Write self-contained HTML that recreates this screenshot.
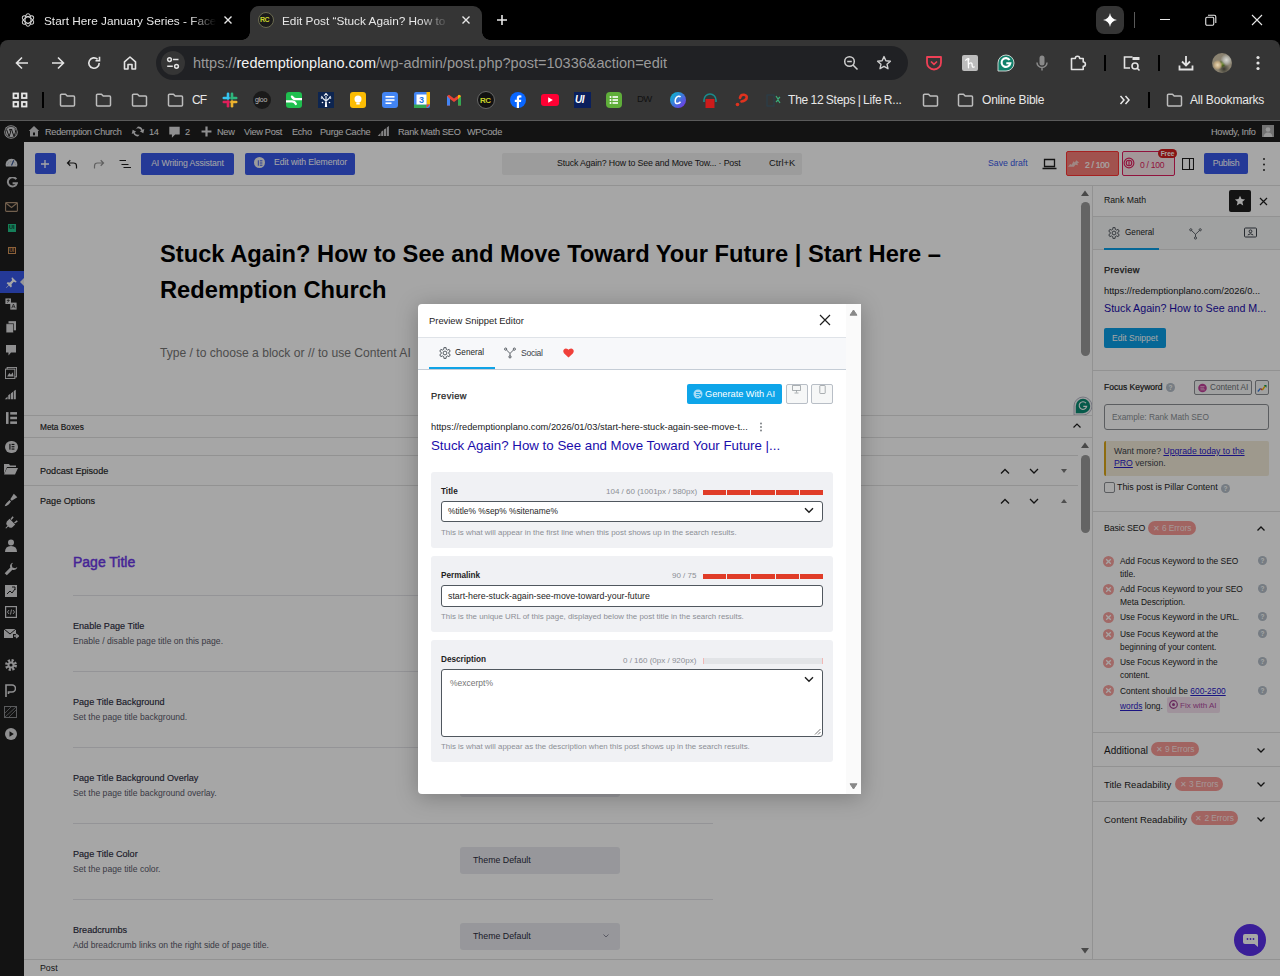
<!DOCTYPE html>
<html><head><meta charset="utf-8"><title>Edit Post</title>
<style>
*{margin:0;padding:0;box-sizing:border-box}
html,body{width:1280px;height:976px;overflow:hidden;background:#000;font-family:"Liberation Sans",sans-serif}
.a{position:absolute}
svg{display:block}
/* chrome */
#tabs{left:0;top:0;width:1280px;height:40px;background:#000}
.tabt{font-size:11.8px;color:#e8e8e8;white-space:nowrap;overflow:hidden;top:14px;height:16px;line-height:15px}
#toolbar{left:0;top:40px;width:1280px;height:81px;background:#353535;border-radius:8px 8px 0 0}
#omni{left:156px;top:46px;width:752px;height:34px;border-radius:17px;background:#202124}
.bmt{font-size:12px;color:#e8e8e8;white-space:nowrap;top:92px;line-height:16px;letter-spacing:-0.2px}
#bmline{left:0;top:120px;width:1280px;height:1px;background:#5a5a5a}
/* wp */
#wp{left:0;top:0;width:1280px;height:976px;clip-path:inset(121px 0 0 0)}
.abt{top:126px;font-size:9.2px;line-height:13px;color:#f0f0f1;white-space:nowrap;letter-spacing:-0.3px}
.mbt{margin-top:1px;font-size:9.1px;line-height:13px;color:#1e1e1e;white-space:nowrap;-webkit-text-stroke:0.15px #1e1e1e}
.poline{left:73px;width:640px;height:1px;background:#e3e3e8}
.pol{left:73px;margin-top:1px;font:normal 9.1px/13px 'Liberation Sans';color:#2c2c40;white-space:nowrap;-webkit-text-stroke:0.15px #2c2c40}
.pod{left:73px;margin-top:1px;font-size:8.6px;line-height:13px;color:#5a5a6a;white-space:nowrap}
.pobox{left:460px;width:160px;height:27px;background:#e8e9ee;border-radius:3px;font:normal 8.8px/27px 'Liberation Sans';color:#2c2c40;padding-left:13px;white-space:nowrap}
.rmh{left:1104px;font-size:9.2px;line-height:13px;color:#1e1e1e;white-space:nowrap;letter-spacing:-0.25px}
.rmbadge{height:14px;border-radius:7px;background:#f89a96;color:rgba(255,255,255,0.8);font-size:8.3px;line-height:14px;text-align:center;white-space:nowrap}
.rmx{left:1103px;width:11px;height:11px;border-radius:50%;background:#f8a29e}
.rmq{left:1258px;width:9px;height:9px;border-radius:50%;background:#b5bfc9;font:bold 6.5px/9px 'Liberation Sans';color:#fff;text-align:center}
.rmi{left:1120px;font-size:8.4px;line-height:12.5px;color:#1e1e1e;white-space:nowrap}
.lnk{color:#2a20c8;text-decoration:underline}
.mpanel{left:431px;width:402px;background:#f0f1f4;border-radius:3px}
.mlab{left:441px;margin-top:1.5px;font:bold 8.2px/12px 'Liberation Sans';color:#1e1e1e;white-space:nowrap}
.mcnt{font-size:8px;line-height:12px;color:#8c8f94;white-space:nowrap}
.mbar{left:703px;width:120px;height:5px;display:flex;gap:1px}
.mbar i{flex:1;background:#e03c28}
.minp{left:441px;width:382px;border:1px solid #50575e;border-radius:3px;background:#fff}
.mval{left:448px;font-size:8.4px;line-height:12px;color:#1e1e1e;white-space:nowrap}
.mhelp{left:441px;font-size:7.9px;line-height:11px;color:#8c8f94;white-space:nowrap}
.btnb{background:#3858e9;color:#fff;font-size:8.7px;line-height:21px;letter-spacing:-0.1px;text-align:center;border-radius:2px;white-space:nowrap}
</style></head><body>
<!-- ============ TAB STRIP ============ -->

<div id="tabs" class="a">
 <svg class="a" style="left:20px;top:12px" width="16" height="16" viewBox="0 0 24 24"><g fill="none" stroke="#d8d8d8" stroke-width="1.6"><ellipse cx="12" cy="12" rx="4.5" ry="9.5"/><ellipse cx="12" cy="12" rx="4.5" ry="9.5" transform="rotate(60 12 12)"/><ellipse cx="12" cy="12" rx="4.5" ry="9.5" transform="rotate(120 12 12)"/></g></svg>
 <div class="a tabt" style="left:44px;width:172px;-webkit-mask-image:linear-gradient(90deg,#000 85%,transparent 100%)">Start Here January Series - Facebook</div>
 <svg class="a" style="left:223px;top:15px" width="10" height="10" viewBox="0 0 10 10"><path d="M1.5 1.5L8.5 8.5M8.5 1.5L1.5 8.5" stroke="#e8e8e8" stroke-width="1.4"/></svg>
 <!-- active tab -->
 <div class="a" style="left:250px;top:6px;width:232px;height:40px;background:#353535;border-radius:9px 9px 0 0"></div>
 <div class="a" style="left:242px;top:32px;width:8px;height:8px;background:radial-gradient(circle at 0 0,#000 7.5px,#353535 8px)"></div>
 <div class="a" style="left:482px;top:32px;width:8px;height:8px;background:radial-gradient(circle at 100% 0,#000 7.5px,#353535 8px)"></div>
 <div class="a" style="left:258px;top:12px;width:16px;height:16px;border-radius:50%;background:#1a1a1a;border:1px solid #6a6a50"></div>
 <div class="a" style="left:260px;top:16px;font:bold 7px 'Liberation Sans';color:#c8d22a;letter-spacing:-0.5px">RC</div>
 <div class="a tabt" style="left:282px;width:168px;-webkit-mask-image:linear-gradient(90deg,#000 82%,transparent 100%)">Edit Post “Stuck Again? How to See and Move</div>
 <svg class="a" style="left:461px;top:15px" width="10" height="10" viewBox="0 0 10 10"><path d="M1.5 1.5L8.5 8.5M8.5 1.5L1.5 8.5" stroke="#e8e8e8" stroke-width="1.4"/></svg>
 <svg class="a" style="left:495px;top:13px" width="14" height="14" viewBox="0 0 14 14"><path d="M7 2V12M2 7H12" stroke="#e8e8e8" stroke-width="1.6"/></svg>
 <!-- right controls -->
 <div class="a" style="left:1096px;top:6px;width:28px;height:28px;border-radius:8px;background:#353535"></div>
 <svg class="a" style="left:1103px;top:13px" width="14" height="14" viewBox="0 0 14 14"><path d="M7 0C7.6 4 10 6.4 14 7C10 7.6 7.6 10 7 14C6.4 10 4 7.6 0 7C4 6.4 6.4 4 7 0Z" fill="#fff"/></svg>
 <div class="a" style="left:1134px;top:12px;width:1px;height:16px;background:#5a5a5a"></div>
 <div class="a" style="left:1160px;top:19px;width:10px;height:1px;background:#e8e8e8"></div>
 <svg class="a" style="left:1205px;top:14px" width="12" height="12" viewBox="0 0 12 12"><rect x="0.75" y="3.25" width="8" height="8" rx="1.2" fill="none" stroke="#e8e8e8" stroke-width="1.1"/><path d="M3 1.2H9.3A1.5 1.5 0 0 1 10.8 2.7V9" fill="none" stroke="#e8e8e8" stroke-width="1.1"/></svg>
 <svg class="a" style="left:1251px;top:14px" width="12" height="12" viewBox="0 0 12 12"><path d="M1 1L11 11M11 1L1 11" stroke="#e8e8e8" stroke-width="1.1"/></svg>
</div>

<!-- ============ TOOLBAR ============ -->

<div id="toolbar" class="a"></div>
<!-- nav icons -->
<svg class="a" style="left:14px;top:55px" width="16" height="16" viewBox="0 0 16 16"><path d="M14 8H2.5M8 2.5L2.5 8L8 13.5" fill="none" stroke="#e3e3e3" stroke-width="1.6"/></svg>
<svg class="a" style="left:50px;top:55px" width="16" height="16" viewBox="0 0 16 16"><path d="M2 8H13.5M8 2.5L13.5 8L8 13.5" fill="none" stroke="#e3e3e3" stroke-width="1.6"/></svg>
<svg class="a" style="left:86px;top:55px" width="16" height="16" viewBox="0 0 16 16"><path d="M13.2 8A5.2 5.2 0 1 1 11.6 4.3" fill="none" stroke="#e3e3e3" stroke-width="1.6"/><path d="M13.5 1.8V5.8H9.5" fill="none" stroke="#e3e3e3" stroke-width="1.6"/></svg>
<svg class="a" style="left:122px;top:55px" width="16" height="16" viewBox="0 0 16 16"><path d="M2.5 14V6.8L8 2L13.5 6.8V14H10V9.5H6V14Z" fill="none" stroke="#e3e3e3" stroke-width="1.6" stroke-linejoin="round"/></svg>
<div id="omni" class="a"></div>
<div class="a" style="left:161px;top:51px;width:24px;height:24px;border-radius:50%;background:#353535"></div>
<svg class="a" style="left:165px;top:55px" width="16" height="16" viewBox="0 0 16 16"><g fill="none" stroke="#e3e3e3" stroke-width="1.5"><circle cx="4.5" cy="4.6" r="1.9"/><path d="M8 4.6H13.5M2.2 11.3H7.8"/><circle cx="11.5" cy="11.3" r="1.9"/></g></svg>
<div class="a" style="left:193px;top:54px;font-size:14.5px;line-height:18px;color:#9a9a9a;white-space:nowrap;letter-spacing:0">https://<span style="color:#f2f2f2">redemptionplano.com</span>/wp-admin/post.php?post=10336&amp;action=edit</div>
<svg class="a" style="left:843px;top:55px" width="16" height="16" viewBox="0 0 16 16"><g fill="none" stroke="#cfcfcf" stroke-width="1.5"><circle cx="6.5" cy="6.5" r="4.8"/><path d="M10 10L14.5 14.5M4.2 6.5H8.8"/></g></svg>
<svg class="a" style="left:876px;top:55px" width="16" height="16" viewBox="0 0 16 16"><path d="M8 1.6L9.9 5.8L14.4 6.2L11 9.2L12 13.7L8 11.3L4 13.7L5 9.2L1.6 6.2L6.1 5.8Z" fill="none" stroke="#cfcfcf" stroke-width="1.4" stroke-linejoin="round"/></svg>
<!-- extensions -->
<svg class="a" style="left:925px;top:55px" width="18" height="16" viewBox="0 0 18 16"><path d="M2 2H16V7.5A7 7 0 0 1 2 7.5Z" fill="none" stroke="#ef4056" stroke-width="1.8" stroke-linejoin="round"/><path d="M6 6.5L9 9.3L12 6.5" fill="none" stroke="#ef4056" stroke-width="1.7"/></svg>
<div class="a" style="left:962px;top:55px;width:16px;height:16px;background:#bdbdbd;border-radius:2px"></div>
<svg class="a" style="left:962px;top:55px" width="16" height="16" viewBox="0 0 16 16"><path d="M3.8 5.2Q5.5 3.2 6.8 3.8Q7.3 4.8 6 5.6M6.2 3.6L6.5 12.8M6.5 9.5Q8 7.2 9.5 8Q10.3 8.8 10.2 11Q10.4 12.6 12.2 12" fill="none" stroke="#fff" stroke-width="1.3" stroke-linecap="round"/></svg>
<svg class="a" style="left:997px;top:54px" width="18" height="18" viewBox="0 0 18 18"><path d="M9 1A8 8 0 1 1 9 17H1V9A8 8 0 0 1 9 1Z" fill="#11806a" stroke="#dcdcdc" stroke-width="0.9"/><path d="M12.6 6A4.4 4.4 0 1 0 13.3 9.3H9.3" fill="none" stroke="#fff" stroke-width="2.1"/></svg>
<svg class="a" style="left:1034px;top:55px" width="16" height="16" viewBox="0 0 16 16"><rect x="5.5" y="0.5" width="5" height="10" rx="2.5" fill="#8a8a8a"/><path d="M3 7.5A5 5 0 0 0 13 7.5M8 12.5V15.5" fill="none" stroke="#8a8a8a" stroke-width="1.5"/></svg>
<svg class="a" style="left:1070px;top:54px" width="17" height="17" viewBox="0 0 17 17"><path d="M1.5 4.5H5.3A2.2 2.2 0 0 1 9.7 4.5H13.2V8A2.2 2.2 0 0 1 13.2 12.4V15.5H1.5Z" fill="none" stroke="#e3e3e3" stroke-width="1.6" stroke-linejoin="round"/></svg>
<div class="a" style="left:1104px;top:55px;width:2px;height:16px;background:#000"></div>
<svg class="a" style="left:1123px;top:55px" width="18" height="17" viewBox="0 0 18 17"><path d="M7 13H1.5V2H9.5" fill="none" stroke="#e3e3e3" stroke-width="1.6"/><rect x="9.5" y="2" width="7" height="3" fill="#e3e3e3"/><circle cx="12" cy="11" r="3" fill="none" stroke="#e3e3e3" stroke-width="1.6"/><path d="M14 13L16.5 15.5" stroke="#e3e3e3" stroke-width="1.6"/></svg>
<div class="a" style="left:1158px;top:55px;width:2px;height:16px;background:#000"></div>
<svg class="a" style="left:1178px;top:55px" width="16" height="16" viewBox="0 0 16 16"><path d="M8 1V10M4 6.5L8 10.5L12 6.5M1.5 10.5V14.5H14.5V10.5" fill="none" stroke="#e3e3e3" stroke-width="1.8"/></svg>
<div class="a" style="left:1212px;top:53px;width:20px;height:20px;border-radius:50%;background:radial-gradient(circle at 28% 60%,#e8d8b8 0,#c0a880 3px,transparent 5px),radial-gradient(circle at 72% 35%,#d8d8d0 0,#b0b0a8 3px,transparent 6px),radial-gradient(circle at 50% 55%,#7a9a30 0,#4a6020 2px,transparent 4px),radial-gradient(circle at 60% 80%,#3a3a30 0,transparent 6px),#8a8270"></div>
<svg class="a" style="left:1254px;top:55px" width="8" height="16" viewBox="0 0 8 16"><g fill="#e3e3e3"><circle cx="4" cy="2.5" r="1.6"/><circle cx="4" cy="8" r="1.6"/><circle cx="4" cy="13.5" r="1.6"/></g></svg>


<!-- bookmarks -->
<svg class="a" style="left:12px;top:92px" width="16" height="16" viewBox="0 0 16 16"><g fill="none" stroke="#e8e8e8" stroke-width="1.8"><rect x="1.5" y="1.5" width="4.5" height="4.5"/><rect x="10" y="1.5" width="4.5" height="4.5"/><rect x="1.5" y="10" width="4.5" height="4.5"/><rect x="10" y="10" width="4.5" height="4.5"/></g></svg>
<div class="a" style="left:42px;top:92px;width:2px;height:16px;background:#000"></div>
<svg class="a" style="left:59px;top:92px" width="17" height="16" viewBox="0 0 17 16"><path d="M1.5 3.2A1 1 0 0 1 2.5 2.2H6.5L8.2 4H14.5A1 1 0 0 1 15.5 5V13A1 1 0 0 1 14.5 14H2.5A1 1 0 0 1 1.5 13Z" fill="none" stroke="#bdbdbd" stroke-width="1.5" stroke-linejoin="round"/></svg><svg class="a" style="left:95px;top:92px" width="17" height="16" viewBox="0 0 17 16"><path d="M1.5 3.2A1 1 0 0 1 2.5 2.2H6.5L8.2 4H14.5A1 1 0 0 1 15.5 5V13A1 1 0 0 1 14.5 14H2.5A1 1 0 0 1 1.5 13Z" fill="none" stroke="#bdbdbd" stroke-width="1.5" stroke-linejoin="round"/></svg><svg class="a" style="left:131px;top:92px" width="17" height="16" viewBox="0 0 17 16"><path d="M1.5 3.2A1 1 0 0 1 2.5 2.2H6.5L8.2 4H14.5A1 1 0 0 1 15.5 5V13A1 1 0 0 1 14.5 14H2.5A1 1 0 0 1 1.5 13Z" fill="none" stroke="#bdbdbd" stroke-width="1.5" stroke-linejoin="round"/></svg><svg class="a" style="left:167px;top:92px" width="17" height="16" viewBox="0 0 17 16"><path d="M1.5 3.2A1 1 0 0 1 2.5 2.2H6.5L8.2 4H14.5A1 1 0 0 1 15.5 5V13A1 1 0 0 1 14.5 14H2.5A1 1 0 0 1 1.5 13Z" fill="none" stroke="#bdbdbd" stroke-width="1.5" stroke-linejoin="round"/></svg>
<div class="a bmt" style="left:192px;letter-spacing:-1px">CF</div>
<svg class="a" style="left:222px;top:92px" width="16" height="16" viewBox="0 0 16 16"><g stroke-width="2.6" stroke-linecap="round"><path d="M6 1.8V6.5" stroke="#36c5f0"/><path d="M1.8 6H6.5" stroke="#36c5f0"/><path d="M10 1.8V6.5" stroke="#2eb67d"/><path d="M14.2 6H9.5" stroke="#2eb67d"/><path d="M10 14.2V9.5" stroke="#ecb22e"/><path d="M14.2 10H9.5" stroke="#ecb22e"/><path d="M6 14.2V9.5" stroke="#e01e5a"/><path d="M1.8 10H6.5" stroke="#e01e5a"/></g></svg>
<div class="a" style="left:253px;top:91px;width:18px;height:18px;border-radius:50%;background:#1a1a1a"></div>
<div class="a" style="left:255px;top:96px;font-size:7px;color:#bbb;letter-spacing:-0.3px">gloo</div>
<div class="a" style="left:286px;top:92px;width:16px;height:16px;border-radius:3px;background:#1fbf4f"></div>
<svg class="a" style="left:286px;top:92px" width="16" height="16" viewBox="0 0 16 16"><path d="M6 4.6Q7.5 7.2 10 7.2H16M0 9.4H6Q8.5 9.4 9.8 12" fill="none" stroke="#fff" stroke-width="2.3" stroke-linecap="round"/></svg>
<div class="a" style="left:318px;top:92px;width:16px;height:16px;background:#0d2550"></div>
<svg class="a" style="left:318px;top:92px" width="16" height="16" viewBox="0 0 16 16"><g fill="none" stroke="#e8eef5" stroke-width="1.1"><path d="M8 14.5V8M8 9L5 6.5M8 9L11 6.5M5 6.5L3.5 4M11 6.5L12.5 4M8 8V4M6 3.5Q8 1.5 10 3.5"/></g><path d="M6.8 15H9.2L8.6 10H7.4Z" fill="#fff"/><g fill="#fff"><circle cx="3.5" cy="6" r="0.8"/><circle cx="12.5" cy="6" r="0.8"/><circle cx="4.5" cy="10.5" r="0.8"/><circle cx="11.5" cy="10.5" r="0.8"/><circle cx="8" cy="2" r="0.9"/></g></svg>
<div class="a" style="left:350px;top:92px;width:16px;height:16px;border-radius:3px;background:#fbbc04"></div>
<svg class="a" style="left:350px;top:92px" width="16" height="16" viewBox="0 0 16 16"><circle cx="8" cy="7" r="3.5" fill="#fff"/><rect x="6.3" y="10.5" width="3.4" height="2" fill="#fff"/></svg>
<div class="a" style="left:382px;top:92px;width:16px;height:16px;border-radius:3px;background:#4285f4"></div>
<svg class="a" style="left:382px;top:92px" width="16" height="16" viewBox="0 0 16 16"><g fill="#fff"><rect x="3.5" y="4" width="9" height="1.6"/><rect x="3.5" y="7.2" width="9" height="1.6"/><rect x="3.5" y="10.4" width="6" height="1.6"/></g></svg>
<svg class="a" style="left:414px;top:92px" width="16" height="16" viewBox="0 0 16 16"><rect x="0" y="0" width="16" height="16" rx="2" fill="#4285f4"/><rect x="0" y="12.5" width="12.5" height="3.5" fill="#34a853"/><rect x="12.5" y="0" width="3.5" height="12.5" fill="#fbbc04"/><path d="M12.5 12.5H16L12.5 16Z" fill="#ea4335"/><rect x="2.5" y="2.5" width="10" height="10" fill="#fff"/><text x="7.5" y="11.2" font-size="9" font-family="Liberation Sans" font-weight="bold" fill="#1a73e8" text-anchor="middle">3</text></svg>
<svg class="a" style="left:446px;top:92px" width="16" height="16" viewBox="0 0 16 16"><path d="M1 4V13.5H4V7L8 10L12 7V13.5H15V4L13 2.8L8 6.5L3 2.8Z" fill="#ea4335"/><path d="M1 4V13.5H4V7Z" fill="#4285f4"/><path d="M12 7V13.5H15V4Z" fill="#34a853"/><path d="M15 4L13 2.8L12 3.6V7Z" fill="#fbbc04"/></svg>
<div class="a" style="left:477px;top:91px;width:18px;height:18px;border-radius:50%;background:#111;border:1px solid #666"></div>
<div class="a" style="left:480px;top:96px;font:bold 8px 'Liberation Sans';color:#c8d22a;letter-spacing:-0.6px">RC</div>
<svg class="a" style="left:510px;top:92px" width="16" height="16" viewBox="0 0 16 16"><circle cx="8" cy="8" r="8" fill="#0866ff"/><path d="M9 16V10H11L11.3 7.8H9V6.4Q9 5.4 10 5.4H11.4V3.4Q10.6 3.3 9.7 3.3Q6.8 3.3 6.8 6.2V7.8H4.8V10H6.8V16Z" fill="#fff"/></svg>
<div class="a" style="left:541px;top:94px;width:18px;height:12px;border-radius:3px;background:#ff0033"></div>
<svg class="a" style="left:541px;top:94px" width="18" height="12" viewBox="0 0 18 12"><path d="M7.2 3.3V8.7L11.8 6Z" fill="#fff"/></svg>
<div class="a" style="left:574px;top:92px;width:17px;height:16px;background:#0a1f5c"></div>
<div class="a" style="left:575px;top:94px;font:bold italic 10px 'Liberation Sans';color:#fff;letter-spacing:-0.5px">UI</div>
<div class="a" style="left:606px;top:92px;width:16px;height:16px;border-radius:4px;background:#5fae3a"></div>
<svg class="a" style="left:606px;top:92px" width="16" height="16" viewBox="0 0 16 16"><g fill="#fff"><circle cx="4.5" cy="5" r="1"/><circle cx="4.5" cy="8" r="1"/><circle cx="4.5" cy="11" r="1"/><rect x="6.5" y="4.2" width="5.5" height="1.6"/><rect x="6.5" y="7.2" width="5.5" height="1.6"/><rect x="6.5" y="10.2" width="5.5" height="1.6"/></g></svg>
<div class="a" style="left:637px;top:93px;font:9.5px 'Liberation Sans';color:#111;letter-spacing:-0.5px">DW</div>
<svg class="a" style="left:670px;top:92px" width="16" height="16" viewBox="0 0 16 16"><defs><linearGradient id="cv" x1="0" y1="0" x2="1" y2="1"><stop offset="0" stop-color="#00c4cc"/><stop offset="1" stop-color="#7d2ae8"/></linearGradient></defs><circle cx="8" cy="8" r="8" fill="url(#cv)"/><path d="M10.5 5.2Q9.8 4 8.4 4.3Q5.3 5.2 5.2 9.2Q5.3 11.8 7.6 11.6Q9.4 11.3 10.5 9.8" fill="none" stroke="#fff" stroke-width="1.5"/></svg>
<svg class="a" style="left:702px;top:92px" width="16" height="16" viewBox="0 0 16 16"><path d="M2 10V8A6 6 0 0 1 14 8V10" fill="none" stroke="#1a8a8a" stroke-width="1.6"/><rect x="3.5" y="7" width="9" height="9" fill="#cc1b1b"/></svg>
<svg class="a" style="left:734px;top:92px" width="16" height="16" viewBox="0 0 16 16"><path d="M6 6Q6.5 2.5 10 2.8Q13.5 3.5 12.5 6.5Q11.8 8.5 7.5 9.5" fill="none" stroke="#e0321e" stroke-width="2.6" stroke-linecap="round"/><circle cx="3.5" cy="12.5" r="1.8" fill="#e0321e"/></svg>
<svg class="a" style="left:766px;top:92px" width="16" height="16" viewBox="0 0 16 16"><rect x="1" y="3" width="7" height="11" fill="none" stroke="#2a3e4a" stroke-width="1.2"/><path d="M10 4L12 7L14 5M10 10L12 8L14 11" stroke="#3ab07a" stroke-width="1.2" fill="none"/></svg>
<div class="a bmt" style="left:788px;word-spacing:-0.8px">The 12 Steps | Life R...</div>
<svg class="a" style="left:922px;top:92px" width="17" height="16" viewBox="0 0 17 16"><path d="M1.5 3.2A1 1 0 0 1 2.5 2.2H6.5L8.2 4H14.5A1 1 0 0 1 15.5 5V13A1 1 0 0 1 14.5 14H2.5A1 1 0 0 1 1.5 13Z" fill="none" stroke="#bdbdbd" stroke-width="1.5" stroke-linejoin="round"/></svg><svg class="a" style="left:957px;top:92px" width="17" height="16" viewBox="0 0 17 16"><path d="M1.5 3.2A1 1 0 0 1 2.5 2.2H6.5L8.2 4H14.5A1 1 0 0 1 15.5 5V13A1 1 0 0 1 14.5 14H2.5A1 1 0 0 1 1.5 13Z" fill="none" stroke="#bdbdbd" stroke-width="1.5" stroke-linejoin="round"/></svg>
<div class="a bmt" style="left:982px">Online Bible</div>
<svg class="a" style="left:1119px;top:94px" width="12" height="12" viewBox="0 0 12 12"><path d="M1.5 2L5 6L1.5 10M6.5 2L10 6L6.5 10" fill="none" stroke="#e8e8e8" stroke-width="1.5"/></svg>
<div class="a" style="left:1148px;top:92px;width:2px;height:16px;background:#000"></div>
<svg class="a" style="left:1166px;top:92px" width="17" height="16" viewBox="0 0 17 16"><path d="M1.5 3.2A1 1 0 0 1 2.5 2.2H6.5L8.2 4H14.5A1 1 0 0 1 15.5 5V13A1 1 0 0 1 14.5 14H2.5A1 1 0 0 1 1.5 13Z" fill="none" stroke="#bdbdbd" stroke-width="1.5" stroke-linejoin="round"/></svg>
<div class="a bmt" style="left:1190px">All Bookmarks</div>
<div id="bmline" class="a"></div>
<!-- ============ WP ============ -->
<div id="wp" class="a">
 <!-- admin bar -->
 <div class="a" style="left:0;top:121px;width:1280px;height:21px;background:#1e1e1e"></div>
 <svg class="a" style="left:4px;top:124.5px" width="14" height="14" viewBox="0 0 14 14"><circle cx="7" cy="7" r="6.8" fill="#d8d8da"/><circle cx="7" cy="7" r="5.6" fill="none" stroke="#1e1e1e" stroke-width="0.7"/><path d="M2.6 4.6L5.1 11.4L6.6 7.2L5.8 4.6M5.3 4.6H8.2M7.6 4.6L10 11.4L11.4 7.4Q12 5.6 10.8 4.6" fill="none" stroke="#1e1e1e" stroke-width="1"/></svg>
 <svg class="a" style="left:28px;top:125px" width="12" height="12" viewBox="0 0 12 12"><path d="M6 1L0.8 6H2V11.5H10V6H11.2Z" fill="#d0d0d2"/><rect x="5" y="7.5" width="2" height="2.8" fill="#1e1e1e"/></svg>
 <div class="a abt" style="left:45px">Redemption Church</div>
 <svg class="a" style="left:131px;top:125px" width="14" height="13" viewBox="0 0 20 18"><path d="M10 2A7 7 0 0 1 16.6 6.5L19 5.5L17.6 11.5L12.5 8.5L14.8 7.5A5 5 0 0 0 5.6 7ZM10 16A7 7 0 0 1 3.4 11.5L1 12.5L2.4 6.5L7.5 9.5L5.2 10.5A5 5 0 0 0 14.4 11Z" fill="#dcdcde"/></svg>
 <div class="a abt" style="left:149px">14</div>
 <svg class="a" style="left:168px;top:125px" width="13" height="14" viewBox="0 0 20 20"><path d="M2 2H18V14H11L6 19V14H2Z" fill="#dcdcde"/></svg>
 <div class="a abt" style="left:185px">2</div>
 <svg class="a" style="left:201px;top:126px" width="11" height="11" viewBox="0 0 20 20"><path d="M8 1H12V8H19V12H12V19H8V12H1V8H8Z" fill="#dcdcde"/></svg>
 <div class="a abt" style="left:217px">New</div>
 <div class="a abt" style="left:244px">View Post</div>
 <div class="a abt" style="left:292px">Echo</div>
 <div class="a abt" style="left:320px">Purge Cache</div>
 <svg class="a" style="left:377px;top:125px" width="14" height="12" viewBox="0 0 20 16"><path d="M1 15L5 11V15ZM6 15V9L9 7V15ZM10 15V6L13 4V15ZM14 15V3L17 1V15Z" fill="#c8c8ca"/></svg>
 <div class="a abt" style="left:398px">Rank Math SEO</div>
 <div class="a abt" style="left:467px">WPCode</div>
 <div class="a abt" style="left:1211px">Howdy, Info</div>
 <div class="a" style="left:1262px;top:125px;width:12px;height:12px;background:#b0b0b0"></div>
 <svg class="a" style="left:1262px;top:125px" width="12" height="12" viewBox="0 0 12 12"><circle cx="6" cy="4.5" r="2.3" fill="#e8e8e8"/><path d="M1.5 12Q2 7.5 6 7.5Q10 7.5 10.5 12Z" fill="#e8e8e8"/></svg>

 <!-- admin sidebar -->
 <div class="a" style="left:0;top:142px;width:24px;height:834px;background:#1e1e1e"></div>
 <div class="a" style="left:0;top:271px;width:24px;height:22px;background:#3858e9"></div>
 <div class="a" style="left:20px;top:278px;width:0;height:0;border-top:4px solid transparent;border-bottom:4px solid transparent;border-right:4px solid #e8e8e8"></div>
 <svg class="a" style="left:5px;top:156px" width="13" height="11" viewBox="0 0 13 11"><path d="M1 10.5A5.8 5.8 0 1 1 12 10.5Z" fill="#dfe2e6"/><path d="M2.5 8.5A4.2 4.2 0 0 1 10.5 8.5" fill="none" stroke="#7a8aa0" stroke-width="0.8" stroke-dasharray="0.8 1.2"/><path d="M6.5 9.5L8.8 4.2" stroke="#2a4a8a" stroke-width="1.1"/></svg>
 <svg class="a" style="left:5.5px;top:177px" width="12" height="11" viewBox="0 0 12 11"><path d="M10.3 2.3A4.6 4.6 0 1 0 10.9 6.2H6.6" fill="none" stroke="#d0d0d2" stroke-width="2"/></svg>
 <svg class="a" style="left:5px;top:202px" width="13" height="10" viewBox="0 0 13 10"><rect x="0.6" y="0.6" width="11.8" height="8.8" rx="0.8" fill="none" stroke="#b09478" stroke-width="1.1"/><path d="M0.8 1L6.5 5.5L12.2 1" fill="none" stroke="#b09478" stroke-width="1.1"/></svg>
 <div class="a" style="left:8px;top:224px;width:7.5px;height:7.5px;background:#22c48a;font:bold 5.5px/7.5px 'Liberation Sans';color:#0a3a2a;text-align:center">UI</div>
 <div class="a" style="left:8px;top:246.5px;width:7.5px;height:7px;border:0.8px solid #d8955a;font:bold 5px/5.5px 'Liberation Sans';color:#d8955a;text-align:center">UI</div>
 <svg class="a" style="left:5px;top:276px" width="13" height="13" viewBox="0 0 20 20"><path d="M11 2L18 9L16.5 10L13.5 9L10 12.5L10.5 16L9 17.5L6 14.5L2 18.5L1.5 18L5.5 14L2.5 11L4 9.5L7.5 10L11 6.5L10 3.5Z" fill="#fff"/></svg>
 <svg class="a" style="left:4px;top:297px" width="14" height="14" viewBox="0 0 20 20"><path d="M2 2H10V10H2Z" fill="#dcdcde"/><path d="M9 8H18V18H9Z" fill="#dcdcde"/><path d="M4 5H8M6 3V5M4.5 8L7.5 5" stroke="#1e1e1e" stroke-width="1"/><path d="M11 16L13.5 10L16 16M12 14H15" stroke="#1e1e1e" stroke-width="1" fill="none"/></svg>
 <svg class="a" style="left:6px;top:321px" width="10" height="12" viewBox="0 0 12 14"><path d="M3 0H12V11H3Z" fill="#dcdcde"/><path d="M0 3H9V14H0Z" fill="#dcdcde" stroke="#1e1e1e" stroke-width="0.8"/></svg>
 <svg class="a" style="left:6px;top:344.5px" width="10" height="11" viewBox="0 0 12 13"><path d="M0 0H12V9H6L3 12.5V9H0Z" fill="#dcdcde"/></svg>
 <svg class="a" style="left:5px;top:366.5px" width="12" height="12" viewBox="0 0 14 14"><rect x="2.5" y="0.5" width="11" height="11" fill="none" stroke="#dcdcde" stroke-width="1.2"/><rect x="0.5" y="2.5" width="11" height="11" fill="#1e1e1e" stroke="#dcdcde" stroke-width="1.2"/><path d="M2.5 11L5 7L7 9L9 6L10 11Z" fill="#dcdcde"/></svg>
 <svg class="a" style="left:4px;top:389px" width="14" height="11" viewBox="0 0 20 16"><path d="M1 15L5 11V15ZM6 15V9L9 7V15ZM10 15V6L13 4V15ZM14 15V3L17 1V15Z" fill="#dcdcde"/></svg>
 <svg class="a" style="left:6px;top:411.5px" width="11" height="12" viewBox="0 0 13 14"><g fill="#dcdcde"><rect x="0" y="0" width="3" height="14"/><rect x="5" y="0" width="8" height="3"/><rect x="5" y="5.5" width="8" height="3"/><rect x="5" y="11" width="8" height="3"/></g></svg>
 <div class="a" style="left:5px;top:440.5px;width:12.5px;height:12.5px;border-radius:50%;background:#dcdcde"></div><svg class="a" style="left:4.5px;top:440px" width="13.5" height="13.5" viewBox="0 0 14 14"><g fill="#1e1e1e"><rect x="4.5" y="4" width="1.2" height="6"/><rect x="6.8" y="4" width="3" height="1.2"/><rect x="6.8" y="6.4" width="3" height="1.2"/><rect x="6.8" y="8.8" width="3" height="1.2"/></g></svg>
 <svg class="a" style="left:4px;top:463px" width="14" height="12" viewBox="0 0 14 12"><path d="M0 1H5L6 2.5H12V4H3L0 11Z" fill="#dcdcde"/><path d="M3 5H14L11 11.5H0Z" fill="#dcdcde"/></svg>
 <svg class="a" style="left:4px;top:493px" width="14" height="14" viewBox="0 0 20 20"><path d="M14 1L19 6L11 11L9 9Z" fill="#dcdcde"/><path d="M8 10L10 12L7 16Q4 19 1 19Q2 16 4 14Z" fill="#dcdcde"/></svg>
 <svg class="a" style="left:4px;top:516px" width="14" height="14" viewBox="0 0 20 20"><path d="M13 1L10 5M19 7L15 10" stroke="#dcdcde" stroke-width="2.2"/><path d="M8 4L16 12L12 16Q9 18 6 15L3 18L2 17L5 14Q2 11 4 8Z" fill="#dcdcde"/></svg>
 <svg class="a" style="left:5px;top:539px" width="12" height="13" viewBox="0 0 12 13"><circle cx="6" cy="3.5" r="3" fill="#dcdcde"/><path d="M0 13Q0 7 6 7Q12 7 12 13Z" fill="#dcdcde"/></svg>
 <svg class="a" style="left:4px;top:562px" width="14" height="14" viewBox="0 0 20 20"><path d="M13 1A5 5 0 0 0 9 8L1 16L4 19L12 11A5 5 0 0 0 19 7L16 9L12 8L11 4L13 1Z" fill="#dcdcde"/></svg>
 <svg class="a" style="left:5px;top:585px" width="12" height="12" viewBox="0 0 12 12"><rect width="12" height="12" fill="#dcdcde"/><path d="M2 9L5 6L7 8L10 4M7 2H10V5" stroke="#1e1e1e" stroke-width="1" fill="none"/></svg>
 <svg class="a" style="left:5px;top:606px" width="12" height="12" viewBox="0 0 12 12"><rect x="0.6" y="0.6" width="10.8" height="10.8" fill="none" stroke="#dcdcde" stroke-width="1.2"/><path d="M4 4L2.5 6L4 8M8 4L9.5 6L8 8M6.5 3.5L5.5 8.5" stroke="#dcdcde" stroke-width="0.9" fill="none"/></svg>
 <svg class="a" style="left:4px;top:629px" width="15" height="12" viewBox="0 0 15 12"><path d="M0 0H12V5H9V9H0Z" fill="#dcdcde"/><path d="M0 0L6 5L12 0" stroke="#1e1e1e" stroke-width="1" fill="none"/><path d="M10 7H14M12 5L14.5 7L12 9" stroke="#dcdcde" stroke-width="1.3" fill="none"/></svg>
 <svg class="a" style="left:4px;top:658px" width="14" height="14" viewBox="0 0 20 20"><path d="M8.5 1H11.5L12 4L14.5 5L17 3.3L19 5.5L17.3 8L18 10.5L21 11V14" fill="none"/><circle cx="10" cy="10" r="6.5" fill="none" stroke="#dcdcde" stroke-width="4" stroke-dasharray="3 2.1"/><circle cx="10" cy="10" r="5" fill="#dcdcde"/><circle cx="10" cy="10" r="2.2" fill="#1e1e1e"/></svg>
 <svg class="a" style="left:5px;top:684px" width="11" height="13" viewBox="0 0 11 13"><path d="M1 13V1H7A3.5 3.5 0 0 1 7 8H3.5V10" fill="none" stroke="#dcdcde" stroke-width="1.6"/></svg>
 <svg class="a" style="left:4px;top:706px" width="13" height="12" viewBox="0 0 13 12"><rect x="0.5" y="0.5" width="12" height="11" fill="none" stroke="#8a8d90" stroke-width="1"/><path d="M1 11L12 1M1 7L7 1M5 11L12 4" stroke="#8a8d90" stroke-width="0.8"/></svg>
 <div class="a" style="left:5px;top:728px;width:12px;height:12px;border-radius:50%;background:#dcdcde"></div><svg class="a" style="left:5px;top:728px" width="12" height="12" viewBox="0 0 12 12"><path d="M4.5 3.2V8.8L8.8 6Z" fill="#1e1e1e"/></svg>

 <!-- editor area -->
 <div class="a" style="left:24px;top:142px;width:1256px;height:834px;background:#fff"></div>
 <!-- header -->
 <div class="a" style="left:24px;top:185px;width:1256px;height:1px;background:#e0e0e0"></div>
 <div class="a" style="left:35px;top:153px;width:21px;height:21px;background:#3858e9;border-radius:2px"></div>
 <svg class="a" style="left:40px;top:159px" width="10" height="10" viewBox="0 0 10 10"><path d="M5 1V9M1 5H9" stroke="#fff" stroke-width="1.3"/></svg>
 <svg class="a" style="left:66px;top:159px" width="12" height="10" viewBox="0 0 12 10"><path d="M10.5 9.5V7Q10.5 4 7.5 4H1.8M4.3 1.3L1.5 4L4.3 6.7" fill="none" stroke="#1e1e1e" stroke-width="1.2"/></svg>
 <svg class="a" style="left:93px;top:159px" width="12" height="10" viewBox="0 0 12 10"><path d="M1.5 9.5V7Q1.5 4 4.5 4H10.2M7.7 1.3L10.5 4L7.7 6.7" fill="none" stroke="#949494" stroke-width="1.2"/></svg>
 <svg class="a" style="left:119px;top:159px" width="13" height="10" viewBox="0 0 13 10"><path d="M0.5 1.5H7M2.5 5.5H9.5M4.5 8.5H12" stroke="#1e1e1e" stroke-width="1.1"/></svg>
 <div class="a btnb" style="left:141px;top:153px;width:93px;height:22px">AI Writing Assistant</div>
 <div class="a btnb" style="left:245px;top:153px;width:110px;height:22px;padding-left:21px;line-height:19px">Edit with Elementor</div>
 <div class="a" style="left:254px;top:157px;width:11px;height:11px;border-radius:50%;background:#f0f0f0"></div>
 <svg class="a" style="left:253.5px;top:156.5px" width="12" height="12" viewBox="0 0 12 12"><g fill="#3858e9"><rect x="3.8" y="3.3" width="1" height="5.4"/><rect x="5.8" y="3.3" width="2.6" height="1"/><rect x="5.8" y="5.5" width="2.6" height="1"/><rect x="5.8" y="7.7" width="2.6" height="1"/></g></svg>
 <div class="a" style="left:502px;top:153px;width:300px;height:22px;background:#f0f0f0;border-radius:2px"></div>
 <div class="a" style="left:557px;top:157px;font-size:8.8px;line-height:13px;color:#1e1e1e;white-space:nowrap;letter-spacing:-0.15px">Stuck Again? How to See and Move Tow... · Post</div>
 <div class="a" style="left:769px;top:157px;font-size:9.3px;line-height:13px;color:#1e1e1e">Ctrl+K</div>
 <div class="a" style="left:988px;top:157px;font-size:8.7px;line-height:13px;color:#3858e9">Save draft</div>
 <svg class="a" style="left:1042px;top:158px" width="15" height="12" viewBox="0 0 15 12"><path d="M2.5 1.5H12.5V8.5H2.5Z M0.5 10.5H14.5" fill="none" stroke="#1e1e1e" stroke-width="1.3"/></svg>
 <div class="a" style="left:1066px;top:151px;width:53px;height:25px;background:#f87f78;border:1px solid #ff3434;border-radius:2px"></div>
 <svg class="a" style="left:1067px;top:158px" width="13" height="10" viewBox="0 0 14 10"><path d="M1 9L3.5 6L5 7L7 3L8.5 4.5L10 2L13 4.5L11 5.5L12 7.5L9 7L7.5 9Z" fill="#f5d0cb"/></svg>
 <div class="a" style="left:1085px;top:159px;font-size:8.6px;line-height:13px;color:#fff;letter-spacing:-0.3px;-webkit-text-stroke:0.2px #fff">2 / 100</div>
 <div class="a" style="left:1122px;top:151px;width:53px;height:25px;background:#fbe8ec;border:1px solid #df1d5c;border-radius:2px"></div>
 <svg class="a" style="left:1123px;top:157px" width="12" height="12" viewBox="0 0 13 13"><g fill="none" stroke="#df1d5c" stroke-width="1.2"><circle cx="6.5" cy="6.5" r="5.3"/><circle cx="6.5" cy="6.5" r="3"/><path d="M6.5 3.5V9.5"/></g></svg>
 <div class="a" style="left:1140px;top:159px;font-size:8.6px;line-height:13px;color:#df1d5c;letter-spacing:-0.3px">0 / 100</div>
 <div class="a" style="left:1158px;top:149px;width:19px;height:9px;background:#d21e1e;border-radius:5px;font:bold 6.5px/9px 'Liberation Sans';color:#fff;text-align:center">Free</div>
 <svg class="a" style="left:1182px;top:158px" width="12" height="12" viewBox="0 0 12 12"><path d="M0.5 0.5H11.5V11.5H0.5Z M7.5 0.5V11.5" fill="none" stroke="#1e1e1e" stroke-width="1.1"/></svg>
 <div class="a" style="left:1204px;top:153px;width:44px;height:21px;background:#3858e9;border-radius:2px;font-size:8.8px;line-height:21px;color:#fff;text-align:center;letter-spacing:-0.35px">Publish</div>
 <svg class="a" style="left:1261px;top:157px" width="6" height="14" viewBox="0 0 6 14"><g fill="#2a2a2a"><circle cx="3" cy="2" r="1"/><circle cx="3" cy="7.5" r="1"/><circle cx="3" cy="13" r="1"/></g></svg>

 <!-- canvas -->
 <div class="a" style="left:160px;top:236px;width:880px;font:bold 23.7px/36px 'Liberation Sans';color:#000;white-space:nowrap">Stuck Again? How to See and Move Toward Your Future | Start Here –<br>Redemption Church</div>
 <div class="a" style="left:160px;top:345px;font-size:12.1px;line-height:16px;color:#757575;white-space:nowrap">Type / to choose a block or // to use Content AI</div>
 <!-- outer scrollbar -->
 <svg class="a" style="left:1080px;top:189px" width="10" height="8" viewBox="0 0 10 8"><path d="M1 7L5 1.5L9 7Z" fill="#707070"/></svg>
 <div class="a" style="left:1081px;top:202px;width:9px;height:154px;background:#9a9a9a;border-radius:5px"></div>
 <!-- grammarly -->
 <svg class="a" style="left:1073px;top:396px" width="20" height="20" viewBox="0 0 20 20"><path d="M10 1A9 9 0 1 1 10 19H1V10A9 9 0 0 1 10 1Z" fill="#f4f4f6" stroke="#9a9cb0" stroke-width="0.7"/><path d="M10 2.8A7.2 7.2 0 1 1 10 17.2H2.8V10A7.2 7.2 0 0 1 10 2.8Z" fill="#0a8a72"/><path d="M13 7.2A3.8 3.8 0 1 0 13.7 10.4H10.3" fill="none" stroke="#fff" stroke-width="1.1"/></svg>
 <!-- meta boxes -->
 <div class="a" style="left:24px;top:415px;width:1068px;height:1px;background:#e0e0e0"></div>
 <div class="a mbt" style="left:40px;top:420px;font-size:8.3px">Meta Boxes</div>
 <svg class="a" style="left:1072px;top:422px" width="10" height="7" viewBox="0 0 10 7"><path d="M1.5 5.5L5 2L8.5 5.5" fill="none" stroke="#1e1e1e" stroke-width="1.2"/></svg>
 <div class="a" style="left:24px;top:437px;width:1068px;height:1px;background:#e0e0e0"></div>
 <div class="a" style="left:24px;top:455px;width:1054px;height:1px;background:#e0e0e0"></div>
 <div class="a mbt" style="left:40px;top:464px">Podcast Episode</div>
 <svg class="a" style="left:999px;top:467px" width="12" height="8" viewBox="0 0 12 8"><path d="M2 6.5L6 2.5L10 6.5" fill="none" stroke="#1e1e1e" stroke-width="1.3"/></svg>
 <svg class="a" style="left:1028px;top:467px" width="12" height="8" viewBox="0 0 12 8"><path d="M2 2L6 6L10 2" fill="none" stroke="#1e1e1e" stroke-width="1.3"/></svg>
 <svg class="a" style="left:1060px;top:468px" width="8" height="6" viewBox="0 0 8 6"><path d="M1 1H7L4 5Z" fill="#7a7a7a"/></svg>
 <div class="a" style="left:24px;top:485px;width:1054px;height:1px;background:#e0e0e0"></div>
 <div class="a mbt" style="left:40px;top:494px">Page Options</div>
 <svg class="a" style="left:999px;top:497px" width="12" height="8" viewBox="0 0 12 8"><path d="M2 6.5L6 2.5L10 6.5" fill="none" stroke="#1e1e1e" stroke-width="1.3"/></svg>
 <svg class="a" style="left:1028px;top:497px" width="12" height="8" viewBox="0 0 12 8"><path d="M2 2L6 6L10 2" fill="none" stroke="#1e1e1e" stroke-width="1.3"/></svg>
 <svg class="a" style="left:1060px;top:498px" width="8" height="6" viewBox="0 0 8 6"><path d="M1 5H7L4 1Z" fill="#7a7a7a"/></svg>
 <!-- inner scrollbar -->
 <svg class="a" style="left:1080px;top:441px" width="10" height="8" viewBox="0 0 10 8"><path d="M1 7L5 1.5L9 7Z" fill="#707070"/></svg>
 <div class="a" style="left:1081px;top:455px;width:9px;height:78px;background:#9a9a9a;border-radius:5px"></div>
 <svg class="a" style="left:1080px;top:947px" width="10" height="8" viewBox="0 0 10 8"><path d="M1 1L5 6.5L9 1Z" fill="#707070"/></svg>
 <!-- page options -->
 <div class="a" style="left:73px;top:553px;font:normal 14px/18px 'Liberation Sans';color:#6b36e6;white-space:nowrap;-webkit-text-stroke:0.45px #6b36e6">Page Title</div>
 <div class="a poline" style="top:595px"></div>
 <div class="a pol" style="top:619px">Enable Page Title</div>
 <div class="a pod" style="top:634px">Enable / disable page title on this page.</div>
 <div class="a poline" style="top:671px"></div>
 <div class="a pol" style="top:695px">Page Title Background</div>
 <div class="a pod" style="top:710px">Set the page title background.</div>
 <div class="a poline" style="top:747px"></div>
 <div class="a pol" style="top:771px">Page Title Background Overlay</div>
 <div class="a pod" style="top:786px">Set the page title background overlay.</div>
 <div class="a pobox" style="top:770px"></div>
 <div class="a poline" style="top:823px"></div>
 <div class="a pol" style="top:847px">Page Title Color</div>
 <div class="a pod" style="top:862px">Set the page title color.</div>
 <div class="a pobox" style="top:847px">Theme Default</div>
 <div class="a poline" style="top:899px"></div>
 <div class="a pol" style="top:923px">Breadcrumbs</div>
 <div class="a pod" style="top:938px">Add breadcrumb links on the right side of page title.</div>
 <div class="a pobox" style="top:923px">Theme Default</div>
 <svg class="a" style="left:602px;top:933px" width="8" height="6" viewBox="0 0 8 6"><path d="M1.5 1.5L4 4L6.5 1.5" fill="none" stroke="#8a8a9a" stroke-width="1"/></svg>
 <!-- footer -->
 <div class="a" style="left:24px;top:959px;width:1256px;height:1px;background:#e0e0e0"></div>
 <div class="a" style="left:40px;top:962px;font-size:8.8px;line-height:12px;color:#1e1e1e">Post</div>

 <!-- rank math sidebar -->
 <div class="a" style="left:1092px;top:186px;width:188px;height:773px;background:#fff;border-left:1px solid #e0e0e0"></div>
 <div class="a" style="left:1093px;top:216px;width:187px;height:34px;background:#f6f7f8"></div>
 <div class="a" style="left:1093px;top:216px;width:187px;height:1px;background:#e0e0e0"></div>
 <div class="a" style="left:1093px;top:249px;width:187px;height:1px;background:#e0e0e0"></div>
 <div class="a" style="left:1104px;top:194px;font-size:8.7px;line-height:13px;color:#1e1e1e;white-space:nowrap">Rank Math</div>
 <div class="a" style="left:1229px;top:190px;width:22px;height:22px;background:#1e1e1e;border-radius:2px"></div>
 <svg class="a" style="left:1234px;top:195px" width="12" height="12" viewBox="0 0 12 12"><path d="M6 0.8L7.5 4.1L11.1 4.4L8.4 6.8L9.2 10.4L6 8.5L2.8 10.4L3.6 6.8L0.9 4.4L4.5 4.1Z" fill="#fff"/></svg>
 <svg class="a" style="left:1259px;top:197px" width="9" height="9" viewBox="0 0 9 9"><path d="M1 1L8 8M8 1L1 8" stroke="#1e1e1e" stroke-width="1.2"/></svg>
 <svg class="a" style="left:1108px;top:227px" width="12" height="12" viewBox="0 0 12 12"><path d="M4.76 2.30 L4.91 0.61 L7.09 0.61 L7.24 2.30 L8.58 3.07 L10.13 2.36 L11.21 4.25 L9.82 5.23 L9.82 6.77 L11.21 7.75 L10.13 9.64 L8.58 8.93 L7.24 9.70 L7.09 11.39 L4.91 11.39 L4.76 9.70 L3.42 8.93 L1.87 9.64 L0.79 7.75 L2.18 6.77 L2.18 5.23 L0.79 4.25 L1.87 2.36 L3.42 3.07Z" fill="none" stroke="#3c434a" stroke-width="0.85" stroke-linejoin="round"/><circle cx="6" cy="6" r="1.9" fill="none" stroke="#3c434a" stroke-width="0.85"/></svg>
 <div class="a" style="left:1125px;top:227px;font-size:8.2px;line-height:12px;color:#1e1e1e">General</div>
 <div class="a" style="left:1104px;top:248px;width:55px;height:2px;background:#0a9ee6"></div>
 <svg class="a" style="left:1189px;top:228px" width="13" height="12" viewBox="0 0 13 12"><g fill="none" stroke="#3c434a" stroke-width="0.8"><circle cx="1.8" cy="1.8" r="1.1"/><circle cx="11.2" cy="1.8" r="1.1"/><circle cx="6.5" cy="10" r="1.1"/><path d="M2.6 2.6L6.5 6.3L10.4 2.6M6.5 6.3V8.9"/></g></svg>
 <svg class="a" style="left:1244px;top:227px" width="13" height="11" viewBox="0 0 13 11"><g fill="none" stroke="#3c434a" stroke-width="1"><rect x="0.5" y="1" width="12" height="9" rx="1"/><circle cx="6.5" cy="4.3" r="1.4"/><path d="M3.8 8Q6.5 5.5 9.2 8"/></g></svg>
 <div class="a" style="left:1104px;top:264px;font:normal 9.3px/12px 'Liberation Sans';color:#242424;letter-spacing:0.4px;-webkit-text-stroke:0.25px #242424">Preview</div>
 <div class="a" style="left:1104px;top:285px;font-size:9.3px;line-height:12px;color:#202124;white-space:nowrap">https://redemptionplano.com/2026/0...</div>
 <div class="a" style="left:1104px;top:302px;font-size:10.7px;line-height:13px;color:#1a0dab;white-space:nowrap">Stuck Again? How to See and M...</div>
 <div class="a" style="left:1104px;top:328px;width:62px;height:20px;background:#0a9ee6;border-radius:2px;font-size:8.5px;line-height:20px;color:#fff;text-align:center">Edit Snippet</div>
 <div class="a" style="left:1093px;top:370px;width:187px;height:1px;background:#e0e0e0"></div>
 <div class="a" style="left:1104px;top:381px;font:normal 8.5px/12px 'Liberation Sans';color:#1e1e1e;white-space:nowrap;-webkit-text-stroke:0.2px #1e1e1e">Focus Keyword</div>
 <div class="a" style="left:1166px;top:383px;width:9px;height:9px;border-radius:50%;background:#b5bfc9;font:bold 6.5px/9px 'Liberation Sans';color:#fff;text-align:center">?</div>
 <div class="a" style="left:1194px;top:380px;width:58px;height:15px;border:1px solid #8c8f94;border-radius:2px;background:#f6f7f7"></div>
 <svg class="a" style="left:1198px;top:383px" width="9" height="10" viewBox="0 0 9 10"><circle cx="4.5" cy="5" r="4.3" fill="#c0409a"/><path d="M2.3 3.6H6.5M2.3 5.2H6.2M2.5 6.8H6.8" stroke="#f0c8e0" stroke-width="0.8"/></svg>
 <div class="a" style="left:1210px;top:382px;font-size:8.2px;line-height:11px;color:#6a6f75;white-space:nowrap">Content AI</div>
 <div class="a" style="left:1255px;top:380px;width:14px;height:15px;border:1px solid #8c8f94;border-radius:2px;background:#f6f7f7"></div>
 <svg class="a" style="left:1257px;top:382.5px" width="10" height="10" viewBox="0 0 10 10"><path d="M0.8 8.5L3.5 5.5" stroke="#3b7ddd" stroke-width="1.3"/><path d="M3.5 5.5L5.3 7" stroke="#e8453c" stroke-width="1.3"/><path d="M5.3 7L8.2 3" stroke="#f4b400" stroke-width="1.3"/><path d="M6.8 2H9.5V4.7Z" fill="#0f9d58"/></svg>
 <div class="a" style="left:1104px;top:404px;width:165px;height:26px;border:1px solid #8c8f94;border-radius:3px;background:#fff"></div>
 <div class="a" style="left:1112px;top:411px;font-size:8.3px;line-height:12px;color:#8a8f94;white-space:nowrap">Example: Rank Math SEO</div>
 <div class="a" style="left:1104px;top:441px;width:165px;height:35px;background:#f3ecd9;border-left:2px solid #dba617;border-radius:2px"></div>
 <div class="a" style="left:1114px;top:445px;width:150px;font-size:8.7px;line-height:12px;color:#3c434a">Want more? <span style="color:#2a20c8;text-decoration:underline">Upgrade today to the PRO</span> version.</div>
 <div class="a" style="left:1104px;top:482px;width:11px;height:11px;border:1px solid #8c8f94;border-radius:2px;background:#fff"></div>
 <div class="a" style="left:1117px;top:481px;font-size:8.9px;line-height:12px;color:#1e1e1e;white-space:nowrap">This post is Pillar Content</div>
 <div class="a" style="left:1221px;top:484px;width:9px;height:9px;border-radius:50%;background:#b5bfc9;font:bold 6.5px/9px 'Liberation Sans';color:#fff;text-align:center">?</div>
 <div class="a" style="left:1093px;top:511px;width:187px;height:1px;background:#e0e0e0"></div>
 <div class="a rmh" style="top:522px;font-size:8.8px;letter-spacing:-0.15px">Basic SEO</div>
 <div class="a rmbadge" style="left:1148px;top:521px;width:48px">✕ 6 Errors</div>
 <svg class="a" style="left:1256px;top:525px" width="10" height="7" viewBox="0 0 10 7"><path d="M1.5 5.5L5 2L8.5 5.5" fill="none" stroke="#1e1e1e" stroke-width="1.3"/></svg>
 <div class="a rmx" style="top:555.5px"></div>
 <svg class="a" style="left:1105px;top:557.5px" width="7" height="7" viewBox="0 0 7 7"><path d="M1.2 1.2L5.8 5.8M5.8 1.2L1.2 5.8" stroke="#fff" stroke-width="1.3"/></svg>
 <div class="a rmq" style="top:556px">?</div>
 <div class="a rmi" style="top:555px">Add Focus Keyword to the SEO<br>title.</div>
 <div class="a rmx" style="top:583.5px"></div>
 <svg class="a" style="left:1105px;top:585.5px" width="7" height="7" viewBox="0 0 7 7"><path d="M1.2 1.2L5.8 5.8M5.8 1.2L1.2 5.8" stroke="#fff" stroke-width="1.3"/></svg>
 <div class="a rmq" style="top:584px">?</div>
 <div class="a rmi" style="top:583px">Add Focus Keyword to your SEO<br>Meta Description.</div>
 <div class="a rmx" style="top:611.5px"></div>
 <svg class="a" style="left:1105px;top:613.5px" width="7" height="7" viewBox="0 0 7 7"><path d="M1.2 1.2L5.8 5.8M5.8 1.2L1.2 5.8" stroke="#fff" stroke-width="1.3"/></svg>
 <div class="a rmq" style="top:612px">?</div>
 <div class="a rmi" style="top:611px">Use Focus Keyword in the URL.</div>
 <div class="a rmx" style="top:628.5px"></div>
 <svg class="a" style="left:1105px;top:630.5px" width="7" height="7" viewBox="0 0 7 7"><path d="M1.2 1.2L5.8 5.8M5.8 1.2L1.2 5.8" stroke="#fff" stroke-width="1.3"/></svg>
 <div class="a rmq" style="top:629px">?</div>
 <div class="a rmi" style="top:628px">Use Focus Keyword at the<br>beginning of your content.</div>
 <div class="a rmx" style="top:656.5px"></div>
 <svg class="a" style="left:1105px;top:658.5px" width="7" height="7" viewBox="0 0 7 7"><path d="M1.2 1.2L5.8 5.8M5.8 1.2L1.2 5.8" stroke="#fff" stroke-width="1.3"/></svg>
 <div class="a rmq" style="top:657px">?</div>
 <div class="a rmi" style="top:656px">Use Focus Keyword in the<br>content.</div>
 <div class="a rmx" style="top:685.0px"></div>
 <svg class="a" style="left:1105px;top:687.0px" width="7" height="7" viewBox="0 0 7 7"><path d="M1.2 1.2L5.8 5.8M5.8 1.2L1.2 5.8" stroke="#fff" stroke-width="1.3"/></svg>
 <div class="a rmq" style="top:685.5px">?</div>
 <div class="a rmi" style="top:684.5px">Content should be <span class="lnk">600-2500</span></div>
 <div class="a rmi" style="top:699.5px"><span class="lnk">words</span> long.</div>
 <div class="a" style="left:1167px;top:697px;width:53px;height:16px;background:#f5e1ef;border-radius:2px"></div>
 <svg class="a" style="left:1169px;top:700px" width="9" height="9" viewBox="0 0 9 9"><circle cx="4.5" cy="4.5" r="3.8" fill="none" stroke="#a04090" stroke-width="1.2"/><circle cx="4.5" cy="4.5" r="1.5" fill="#a04090"/></svg>
 <div class="a" style="left:1180px;top:700px;font-size:8px;line-height:12px;color:#b04aa0;white-space:nowrap">Fix with AI</div>
 <div class="a" style="left:1093px;top:732px;width:187px;height:1px;background:#e0e0e0"></div>
 <div class="a rmh" style="top:744px;font-size:10px;letter-spacing:0">Additional</div>
 <div class="a rmbadge" style="left:1151px;top:742px;width:48px">✕ 9 Errors</div>
 <svg class="a" style="left:1256px;top:747px" width="10" height="7" viewBox="0 0 10 7"><path d="M1.5 1.5L5 5L8.5 1.5" fill="none" stroke="#1e1e1e" stroke-width="1.3"/></svg>
 <div class="a" style="left:1093px;top:766px;width:187px;height:1px;background:#e0e0e0"></div>
 <div class="a rmh" style="top:778px;font-size:9.5px;letter-spacing:0">Title Readability</div>
 <div class="a rmbadge" style="left:1175px;top:777px;width:48px">✕ 3 Errors</div>
 <svg class="a" style="left:1256px;top:781px" width="10" height="7" viewBox="0 0 10 7"><path d="M1.5 1.5L5 5L8.5 1.5" fill="none" stroke="#1e1e1e" stroke-width="1.3"/></svg>
 <div class="a" style="left:1093px;top:801px;width:187px;height:1px;background:#e0e0e0"></div>
 <div class="a rmh" style="top:813px;font-size:9.5px;letter-spacing:0">Content Readability</div>
 <div class="a rmbadge" style="left:1191px;top:811px;width:47px">✕ 2 Errors</div>
 <svg class="a" style="left:1256px;top:816px" width="10" height="7" viewBox="0 0 10 7"><path d="M1.5 1.5L5 5L8.5 1.5" fill="none" stroke="#1e1e1e" stroke-width="1.3"/></svg>
 <!-- chat bubble -->
 <div class="a" style="left:1234px;top:924px;width:32px;height:32px;border-radius:50%;background:#5a2fea"></div>
 <svg class="a" style="left:1242px;top:933px" width="17" height="15" viewBox="0 0 17 15"><path d="M3 1H14A2 2 0 0 1 16 3V14L12.5 11H3A2 2 0 0 1 1 9V3A2 2 0 0 1 3 1Z" fill="#fff"/><g fill="#5a2fea"><circle cx="5.5" cy="6" r="0.9"/><circle cx="8.5" cy="6" r="0.9"/><circle cx="11.5" cy="6" r="0.9"/></g></svg>


 <!-- overlay -->
 <div class="a" style="left:0;top:121px;width:1280px;height:855px;background:rgba(0,0,0,0.35)"></div>
 <!-- modal -->
 <div class="a" style="left:418px;top:304px;width:443px;height:490px;background:#fff;border-radius:4px 0 0 4px;box-shadow:0 3px 22px rgba(0,0,0,0.26)"></div>
 <div class="a" style="left:846px;top:304px;width:15px;height:490px;background:#fafafa"></div>
 <div class="a" style="left:429px;top:314px;font-size:9.4px;line-height:13px;color:#1e1e1e;white-space:nowrap">Preview Snippet Editor</div>
 <svg class="a" style="left:819px;top:314px" width="12" height="12" viewBox="0 0 12 12"><path d="M1 1L11 11M11 1L1 11" stroke="#1e1e1e" stroke-width="1.2"/></svg>
 <div class="a" style="left:418px;top:337px;width:428px;height:1px;background:#dfe3e8"></div>
 <div class="a" style="left:418px;top:338px;width:428px;height:31px;background:#f7f8fa"></div>
 <div class="a" style="left:418px;top:369px;width:428px;height:1px;background:#c5cdd6"></div>
 <div class="a" style="left:429px;top:367px;width:66px;height:2px;background:#10a3e6"></div>
 <svg class="a" style="left:439px;top:347px" width="12" height="12" viewBox="0 0 12 12"><path d="M4.76 2.30 L4.91 0.61 L7.09 0.61 L7.24 2.30 L8.58 3.07 L10.13 2.36 L11.21 4.25 L9.82 5.23 L9.82 6.77 L11.21 7.75 L10.13 9.64 L8.58 8.93 L7.24 9.70 L7.09 11.39 L4.91 11.39 L4.76 9.70 L3.42 8.93 L1.87 9.64 L0.79 7.75 L2.18 6.77 L2.18 5.23 L0.79 4.25 L1.87 2.36 L3.42 3.07Z" fill="none" stroke="#3c434a" stroke-width="0.85" stroke-linejoin="round"/><circle cx="6" cy="6" r="1.9" fill="none" stroke="#3c434a" stroke-width="0.85"/></svg>
 <div class="a" style="left:455px;top:347px;font-size:8.2px;line-height:12px;color:#1e1e1e">General</div>
 <svg class="a" style="left:504px;top:347px" width="12" height="12" viewBox="0 0 13 12"><g fill="none" stroke="#3c434a" stroke-width="0.9"><circle cx="1.8" cy="1.8" r="1.2"/><circle cx="11.2" cy="1.8" r="1.2"/><circle cx="6.5" cy="10.2" r="1.2"/><path d="M2.7 2.7L6.5 6.5L10.3 2.7M6.5 6.5V9"/></g></svg>
 <div class="a" style="left:521px;top:346.5px;font-size:8.6px;line-height:12px;color:#3c434a;letter-spacing:-0.3px">Social</div>
 <svg class="a" style="left:563px;top:348px" width="11" height="10" viewBox="0 0 11 10"><path d="M5.5 9.6L1.2 5.4Q-0.5 3.4 0.9 1.5Q2.6 -0.4 4.6 1L5.5 1.8L6.4 1Q8.4 -0.4 10.1 1.5Q11.5 3.4 9.8 5.4Z" fill="#f0403a"/></svg>
 <!-- modal scrollbar -->
 <svg class="a" style="left:849px;top:309px" width="9" height="7" viewBox="0 0 9 7"><path d="M1 6.2L4.5 1L8 6.2Z" fill="#888" stroke="#888" stroke-width="1" stroke-linejoin="round"/></svg>
 <svg class="a" style="left:849px;top:783px" width="9" height="7" viewBox="0 0 9 7"><path d="M1 0.8L4.5 6L8 0.8Z" fill="#888" stroke="#888" stroke-width="1" stroke-linejoin="round"/></svg>
 <!-- preview -->
 <div class="a" style="left:431px;top:390px;font:normal 9.3px/12px 'Liberation Sans';color:#242424;letter-spacing:0.4px;-webkit-text-stroke:0.25px #242424">Preview</div>
 <div class="a" style="left:687px;top:384px;width:95px;height:20px;background:#0ea5e9;border-radius:2px"></div>
 <svg class="a" style="left:692.5px;top:389px" width="10" height="10" viewBox="0 0 10 10"><circle cx="5" cy="5" r="4.5" fill="#a8dcf6"/><path d="M3 3.5H7M3 5.5H6.5M3.5 7.5H6" stroke="#0ea5e9" stroke-width="0.9"/><circle cx="7.3" cy="6.3" r="1" fill="#0ea5e9"/></svg>
 <div class="a" style="left:705px;top:388px;font-size:9.2px;line-height:12px;color:#fff;white-space:nowrap">Generate With AI</div>
 <div class="a" style="left:786px;top:384px;width:22px;height:20px;border:1px solid #b8bec6;border-radius:2px;background:#f6f7f7"></div>
 <svg class="a" style="left:792px;top:385px" width="9" height="9" viewBox="0 0 9 9"><path d="M0.5 0.5H8.5V5.5H0.5Z M4.5 5.5V7.5M2.5 8H6.5" fill="none" stroke="#8a8f94" stroke-width="0.7"/></svg>
 <div class="a" style="left:811px;top:384px;width:22px;height:20px;border:1px solid #b8bec6;border-radius:2px;background:#f6f7f7"></div>
 <svg class="a" style="left:818.5px;top:385px" width="7" height="9" viewBox="0 0 7 9"><rect x="0.8" y="0.5" width="5.4" height="8" rx="0.6" fill="none" stroke="#8a8f94" stroke-width="0.7"/></svg>
 <div class="a" style="left:431px;top:421px;font-size:9.3px;line-height:12px;color:#202124;white-space:nowrap">https://redemptionplano.com/2026/01/03/start-here-stuck-again-see-move-t...</div>
 <svg class="a" style="left:759px;top:422px" width="4" height="10" viewBox="0 0 4 10"><g fill="#70757a"><circle cx="2" cy="1.5" r="0.9"/><circle cx="2" cy="5" r="0.9"/><circle cx="2" cy="8.5" r="0.9"/></g></svg>
 <div class="a" style="left:431px;top:437px;font-size:13.3px;line-height:17px;color:#1a0dab;white-space:nowrap">Stuck Again? How to See and Move Toward Your Future |...</div>
 <!-- title panel -->
 <div class="a mpanel" style="top:472px;height:76px"></div>
 <div class="a mlab" style="top:484px">Title</div>
 <div class="a mcnt" style="top:486px;left:606px">104 / 60 (1001px / 580px)</div>
 <div class="a mbar" style="top:490px"><i></i><i></i><i></i><i></i><i></i></div>
 <div class="a minp" style="top:501px;height:21px"></div>
 <div class="a mval" style="top:505px">%title% %sep% %sitename%</div>
 <svg class="a" style="left:804px;top:507px" width="10" height="7" viewBox="0 0 10 7"><path d="M1 1.2L5 5.2L9 1.2" fill="none" stroke="#1e1e1e" stroke-width="1.4"/></svg>
 <div class="a mhelp" style="top:527px">This is what will appear in the first line when this post shows up in the search results.</div>
 <!-- permalink panel -->
 <div class="a mpanel" style="top:556px;height:76px"></div>
 <div class="a mlab" style="top:568px">Permalink</div>
 <div class="a mcnt" style="top:570px;left:672px">90 / 75</div>
 <div class="a mbar" style="top:574px"><i></i><i></i><i></i><i></i><i></i></div>
 <div class="a minp" style="top:585px;height:22px"></div>
 <div class="a mval" style="top:590px;font-size:8.8px">start-here-stuck-again-see-move-toward-your-future</div>
 <div class="a mhelp" style="top:611px">This is the unique URL of this page, displayed below the post title in the search results.</div>
 <!-- description panel -->
 <div class="a mpanel" style="top:640px;height:122px"></div>
 <div class="a mlab" style="top:652px">Description</div>
 <div class="a mcnt" style="top:655px;left:623px">0 / 160 (0px / 920px)</div>
 <div class="a" style="left:703px;top:658px;width:120px;height:6px;background:#e2e4e7;border-left:1px solid #f2b8b5;border-right:1px solid #f2b8b5"></div>
 <div class="a minp" style="top:669px;height:68px"></div>
 <div class="a mval" style="top:677px;left:450px;color:#757575;font-size:8.5px">%excerpt%</div>
 <svg class="a" style="left:804px;top:676px" width="10" height="7" viewBox="0 0 10 7"><path d="M1 1.2L5 5.2L9 1.2" fill="none" stroke="#1e1e1e" stroke-width="1.4"/></svg>
 <svg class="a" style="left:814px;top:728px" width="7" height="7" viewBox="0 0 7 7"><path d="M6.5 1L1 6.5M6.5 4L4 6.5" stroke="#555" stroke-width="0.8"/></svg>
 <div class="a mhelp" style="top:741px">This is what will appear as the description when this post shows up in the search results.</div>

</div>

</body></html>
